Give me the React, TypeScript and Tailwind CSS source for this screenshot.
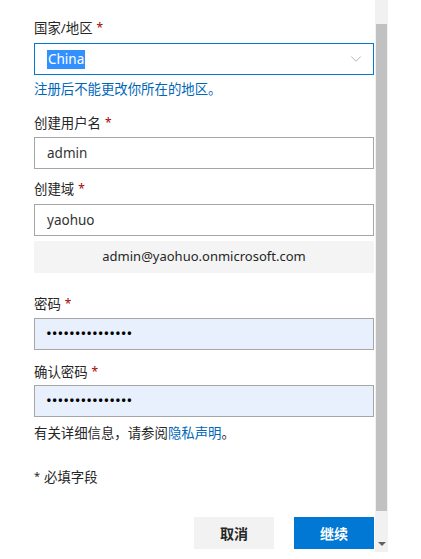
import { ChevronDown } from 'lucide-react';

const font = "font-['Noto_Sans','Noto_Sans_CJK_SC',sans-serif]";

const Label = ({ text, className = '' }: { text: string; className?: string }) => (
  <div className={`h-[20px] flex items-center text-[13.4px] leading-[20px] text-[#262626] ${className}`}>
    {text}
    <span className="ml-[4px] leading-none text-[#a80000] text-[12px]">*</span>
  </div>
);

const TextBox = ({ value, className = '' }: { value: string; className?: string }) => (
  <div
    className={`h-[32px] border border-[#a6a6a6] bg-white flex items-center pl-[12px] text-[13.5px] text-[#333] ${className}`}
  >
    {value}
  </div>
);

const PasswordBox = ({ className = '' }: { className?: string }) => (
  <div
    className={`h-[32px] border border-[#a6a6a6] bg-[#e8f0fe] flex items-center pl-[11px] text-[15.3px] leading-none text-black ${className}`}
  >
    •••••••••••••••
  </div>
);

export default function App() {
  return (
    <div className={`w-[421px] h-[559px] bg-white flex ${font}`}>
      <div className="w-[375px] pl-[34px] pr-[1px]">
        <Label text="国家/地区" className="mt-[18px]" />
        <div className="mt-[5px] h-[32px] border border-[#0078d4] flex items-center justify-between pl-[12px] pr-[8px]">
          <span className="bg-[#3390ff] text-white text-[13.5px] leading-[19px] px-[1px]">China</span>
          <ChevronDown size={18} strokeWidth={1} className="text-[#999]" />
        </div>
        <div className="mt-[4px] h-[20px] text-[13.4px] leading-[20px] text-[#0067b8]">注册后不能更改你所在的地区。</div>

        <Label text="创建用户名" className="mt-[14px]" />
        <TextBox value="admin" className="mt-[4px]" />

        <Label text="创建域" className="mt-[10px]" />
        <TextBox value="yaohuo" className="mt-[5px]" />
        <div className="mt-[5px] h-[32px] bg-[#f4f4f4] flex items-center justify-center text-[13px] text-[#262626]">
          admin@yaohuo.onmicrosoft.com
        </div>

        <Label text="密码" className="mt-[21px]" />
        <PasswordBox className="mt-[4px]" />

        <Label text="确认密码" className="mt-[12px]" />
        <PasswordBox className="mt-[3px]" />

        <div className="mt-[6px] h-[20px] text-[13.4px] leading-[20px] text-[#262626]">
          有关详细信息，请参阅<span className="text-[#0067b8]">隐私声明</span>。
        </div>
        <div className="mt-[24px] h-[20px] flex items-center text-[13.4px] leading-[20px] text-[#262626]">
          <span className="text-[11px] leading-none mr-[4px] -mt-[3px]">*</span>必填字段
        </div>

        <div className="mt-[30px] flex justify-end gap-[20px]">
          <button className="w-[80px] h-[32px] bg-[#f2f2f2] text-[14px] font-bold text-[#262626]">取消</button>
          <button className="w-[80px] h-[32px] bg-[#0078d4] text-[14px] font-bold text-white">继续</button>
        </div>
      </div>

      {/* scrollbar */}
      <div className="w-[13px] h-[552px] bg-[#f1f1f1] flex flex-col items-center">
        <div className="mt-[24px] w-[11px] h-[487px] bg-[#c1c1c1]" />
        <div className="mt-[31px] w-0 h-0 border-l-[4px] border-r-[4px] border-t-[4px] border-l-transparent border-r-transparent border-t-[#606060]" />
      </div>
    </div>
  );
}
